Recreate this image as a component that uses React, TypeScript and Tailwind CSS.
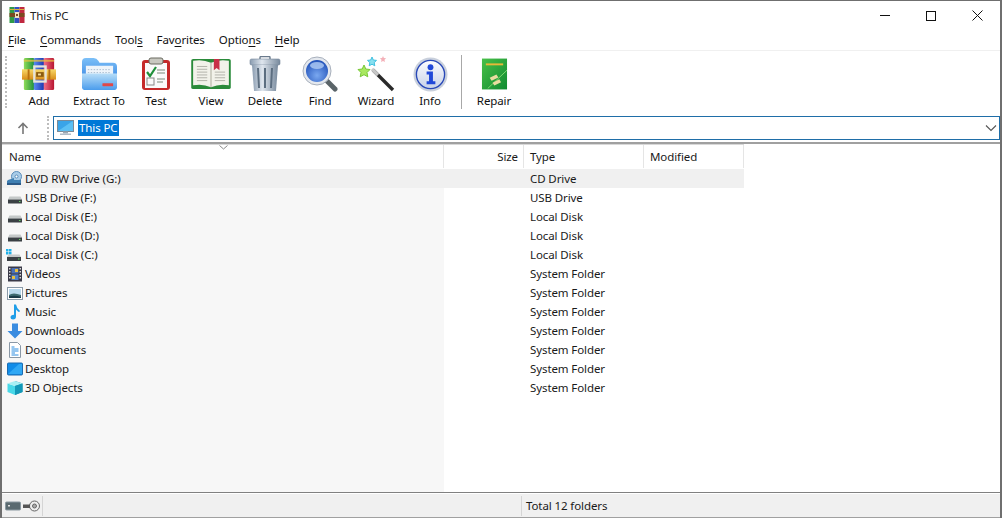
import React from "react";

const Add = () => (
  <svg width="34" height="34" viewBox="0 0 36 36">
    <defs>
      <linearGradient id="ag" x1="0" x2="1"><stop offset="0" stopColor="#8fdc5a" /><stop offset="1" stopColor="#1f8f3a" /></linearGradient>
      <linearGradient id="ab" x1="0" x2="1"><stop offset="0" stopColor="#5a8cf0" /><stop offset="1" stopColor="#1a34b0" /></linearGradient>
      <linearGradient id="ar" x1="0" x2="1"><stop offset="0" stopColor="#f0708a" /><stop offset="1" stopColor="#b81530" /></linearGradient>
      <linearGradient id="ay" x1="0" y1="0" x2="0" y2="1"><stop offset="0" stopColor="#f8d868" /><stop offset="1" stopColor="#d88c18" /></linearGradient>
    </defs>
    <rect x="2" y="1" width="11" height="34" rx="1.5" fill="url(#ag)" />
    <rect x="12.5" y="1" width="11" height="34" rx="1.5" fill="url(#ab)" />
    <rect x="23" y="1" width="11" height="34" rx="1.5" fill="url(#ar)" />
    <rect x="2" y="3" width="32" height="2" fill="#e8c040" opacity=".75" />
    <rect x="0" y="13" width="36" height="11" fill="url(#ay)" />
    <rect x="6" y="13" width="2" height="11" fill="#b87010" />
    <rect x="28" y="13" width="2" height="11" fill="#b87010" />
    <rect x="13" y="10" width="12" height="16" fill="none" stroke="#e4e4dc" strokeWidth="2.4" />
    <rect x="15" y="16" width="8" height="5" fill="#8a5a10" />
    <rect x="17" y="17.5" width="3" height="2" fill="#f8e0a0" />
  </svg>
);
const Extract = () => (
  <svg width="37" height="35" viewBox="0 0 38 36">
    <defs>
      <linearGradient id="eb" x1="0" y1="0" x2="0" y2="1"><stop offset="0" stopColor="#7cc0f8" /><stop offset="1" stopColor="#2a78dc" /></linearGradient>
      <linearGradient id="ef" x1="0" y1="0" x2="0" y2="1"><stop offset="0" stopColor="#b8def8" /><stop offset="1" stopColor="#4a9cec" /></linearGradient>
    </defs>
    <path d="M1 5 Q1 1 5 1 H13 Q16 1 18 4 L19 6 H33 Q37 6 37 10 V30 H1Z" fill="url(#eb)" />
    <rect x="5" y="9" width="28" height="11" fill="#eef4fa" />
    <path d="M7 13H31M7 16H31" stroke="#a8bcd0" strokeDasharray="1.5 1.5" />
    <path d="M1 17 H37 V31 Q37 34 33 34 H5 Q1 34 1 31Z" fill="url(#ef)" />
    <rect x="22" y="27" width="11" height="3" rx=".5" fill="#e04848" />
  </svg>
);
const Test = () => (
  <svg width="30" height="34" viewBox="0 0 30 34">
    <rect x="1" y="3" width="28" height="30" rx="3" fill="#c52a2a" />
    <rect x="4" y="6" width="22" height="25" fill="#fafafa" />
    <rect x="8" y="1" width="14" height="6" rx="2" fill="#c8c8c0" stroke="#6a6a60" />
    <path d="M6 15 L9 19 L15 10" stroke="#1f8f3a" strokeWidth="2.2" fill="none" />
    <path d="M16 13H24M16 16H24M16 22H24M16 25H22" stroke="#7a8a7a" />
    <rect x="6" y="21" width="7" height="7" fill="none" stroke="#888" />
  </svg>
);
const View = () => (
  <svg width="42" height="32" viewBox="0 0 42 34">
    <rect x="0" y="1" width="42" height="32" rx="2" fill="#2a8a3a" />
    <path d="M2 3 Q12 1 21 5 Q30 1 40 3 V29 Q30 27 21 31 Q12 27 2 29Z" fill="#f2f2ea" />
    <path d="M21 5V31" stroke="#a8a898" />
    <path d="M6 9H17M6 12H17M6 15H17M6 18H17M6 21H17M6 24H17M25 15H36M25 18H36M25 21H36M25 24H36" stroke="#b0b0a8" />
    <path d="M24 1H30V13L27 10.5L24 13Z" fill="#c83048" />
  </svg>
);
const Trash = () => (
  <svg width="32" height="36" viewBox="0 0 32 36">
    <defs>
      <linearGradient id="tg" x1="0" x2="1"><stop offset="0" stopColor="#8a9cb0" /><stop offset=".4" stopColor="#dfe6ee" /><stop offset="1" stopColor="#77899c" /></linearGradient>
    </defs>
    <rect x="11" y="0.5" width="10" height="4" rx="1" fill="none" stroke="#6a7a8c" strokeWidth="1.4" />
    <rect x="1" y="3" width="30" height="6" rx="1.5" fill="url(#tg)" stroke="#75879a" strokeWidth=".6" />
    <path d="M3 9H29L27 35H5Z" fill="url(#tg)" />
    <path d="M9 12L10 32M16 12V32M23 12L22 32" stroke="#5c6e80" strokeWidth="2" />
  </svg>
);
const Find = () => (
  <svg width="36" height="36" viewBox="0 0 36 36">
    <defs>
      <radialGradient id="fg" cx=".5" cy=".7" r=".7"><stop offset="0" stopColor="#7aa8f0" /><stop offset="1" stopColor="#1f50b8" /></radialGradient>
    </defs>
    <path d="M23 23L33 33" stroke="#5a6468" strokeWidth="5" strokeLinecap="round" />
    <circle cx="15" cy="15" r="14" fill="#e4e8ee" stroke="#a8b0bc" />
    <circle cx="15" cy="15" r="11" fill="url(#fg)" />
    <ellipse cx="15" cy="9.5" rx="7" ry="3.5" fill="#b0ccf4" opacity=".8" />
  </svg>
);
const Wizard = () => (
  <svg width="38" height="36" viewBox="0 0 38 36">
    <path d="M16 14L36 34" stroke="#2a2a2a" strokeWidth="3.4" />
    <path d="M15 13L21 19" stroke="#c8c8c8" strokeWidth="3.4" />
    <path d="M7 9l1.8 4 4.2.5-3 3 .8 4.3L7 18.700l-3.800 2.100.8-4.300-3-3 4.200-.5z" fill="#a8e860" stroke="#78c838" />
    <path d="M15 1l1.300 3 3.200.4-2.300 2.200.6 3.200-2.800-1.600-2.800 1.600.6-3.200-2.300-2.200 3.200-.4z" fill="#88e0f0" stroke="#40c0e0" />
    <path d="M26 0l.9 2 2.200.3-1.600 1.500.4 2.200-1.900-1-1.900 1 .4-2.200-1.600-1.500 2.200-.3z" fill="#f4b0b8" />
  </svg>
);
const Info = () => (
  <svg width="35" height="35" viewBox="0 0 36 36">
    <defs>
      <linearGradient id="ig" x1="0" y1="0" x2="0" y2="1"><stop offset="0" stopColor="#fbfcff" /><stop offset="1" stopColor="#c8d2e8" /></linearGradient>
    </defs>
    <circle cx="18" cy="18" r="17.500" fill="#c9d0dc" />
    <circle cx="18" cy="18" r="14.500" fill="url(#ig)" stroke="#2848b8" strokeWidth="1.4" />
    <circle cx="18" cy="10.500" r="3" fill="#2048d8" />
    <path d="M14 15H20.500V25H23V28H14V25H16.500V18H14Z" fill="#2048d8" />
  </svg>
);
const Repair = () => (
  <svg width="27" height="34" viewBox="0 0 28 34">
    <defs>
      <linearGradient id="rg" x1="0" y1="0" x2="1" y2="1"><stop offset="0" stopColor="#48c048" /><stop offset="1" stopColor="#108a30" /></linearGradient>
    </defs>
    <rect x="1" y="1" width="26" height="32" fill="url(#rg)" />
    <rect x="5" y="6" width="18" height="2" fill="#e8b838" />
    <path d="M7 32L27 13" stroke="#80d870" />
    <path d="M9 21l7-3.500 2 3-7 3.500zM12 26l7-3.500 1.800 3-7 3.500z" fill="#e8dca0" />
  </svg>
);

const Tool = ({ w, label, children }: { w: string; label: string; children: React.ReactNode }) => (
  <div className={`${w} flex flex-col items-center`}>
    <div className="h-[38px] pt-[2px] flex items-center justify-center">{children}</div>
    <span className="mt-[1px] text-[11.5px] leading-[16px] tracking-[-0.1px] text-[#111]">{label}</span>
  </div>
);

const Disk = () => (
  <svg width="16" height="16" viewBox="0 0 16 16">
    <path d="M2.500 6.500H13.500L15 9.500H1Z" fill="#c4c8c8" />
    <rect x="1" y="9.500" width="14" height="4" fill="#3a4044" />
    <rect x="12" y="11" width="1.500" height="1" fill="#60d060" />
  </svg>
);
const Dvd = () => (
  <svg width="17" height="16" viewBox="0 0 17 16">
    <circle cx="10.500" cy="5.500" r="5" fill="#a8cce8" stroke="#5a8cb8" />
    <circle cx="10.500" cy="5.500" r="1.500" fill="#fff" stroke="#5a8cb8" />
    <path d="M2 9L8 7V9H15V13Q15 14 13 14H3Q1 14 1 13V10Z" fill="#3f7fb2" />
    <rect x="1" y="12" width="14" height="2" fill="#2c5a88" />
  </svg>
);
const SysDisk = () => (
  <svg width="18" height="16" viewBox="0 0 18 16">
    <path d="M1 2h2.500v2.500H1zM4 2h2.500v2.500H4zM1 5h2.500v2.500H1zM4 5h2.500v2.500H4z" fill="#20b0e8" />
    <path d="M3.500 7.500H14.500L16 10H2Z" fill="#c4c8c8" />
    <rect x="2" y="10" width="14" height="4" fill="#3a4044" />
    <rect x="13" y="11.500" width="1.500" height="1" fill="#60d060" />
  </svg>
);
const Videos = () => (
  <svg width="16" height="16" viewBox="0 0 16 16">
    <rect x="1" y="0.500" width="14" height="15" fill="#3a3a48" />
    <path d="M2 2h1.500v1.500H2zM2 5h1.500v1.500H2zM2 8h1.500v1.500H2zM2 11h1.500v1.500H2zM12.500 2H14v1.500h-1.500zM12.500 5H14v1.500h-1.500zM12.500 8H14v1.500h-1.500zM12.500 11H14v1.500h-1.500z" fill="#d8d8d8" />
    <rect x="4.500" y="2" width="7" height="5.500" fill="#4a70b8" />
    <rect x="4.500" y="8.500" width="7" height="5.500" fill="#5080c8" />
    <rect x="8" y="3" width="3" height="3" fill="#e8c040" />
    <rect x="5" y="10" width="3" height="3" fill="#e8c040" />
  </svg>
);
const Pictures = () => (
  <svg width="16" height="16" viewBox="0 0 16 16">
    <rect x="0.500" y="2.500" width="15" height="12" fill="#fff" stroke="#8a9aa8" />
    <rect x="2" y="4" width="12" height="9" fill="#b8d8ec" />
    <path d="M2 10Q6 7 14 10V13H2Z" fill="#3e6a70" />
    <path d="M2 11.500Q8 10 14 12V13H2Z" fill="#1a3a48" />
  </svg>
);
const Music = () => (
  <svg width="16" height="16" viewBox="0 0 16 16">
    <path d="M7 0.500H9Q9.500 4 13 7Q12 9 10 6.500L9 5.500V12.500Q9 15.500 6 15.500Q3.500 15.500 3.500 13.500Q3.500 11 7 10.800Z" fill="#1f9ee8" />
  </svg>
);
const Downloads = () => (
  <svg width="16" height="16" viewBox="0 0 16 16">
    <path d="M5 0.500H11V8H15.500L8 15.500L0.500 8H5Z" fill="#3a8ce0" />
  </svg>
);
const Documents = () => (
  <svg width="16" height="16" viewBox="0 0 16 16">
    <path d="M2.500 0.500H10.500L13.500 3.500V15.500H2.500Z" fill="#fff" stroke="#8a98a6" />
    <path d="M4.500 5H7.500M4.500 7H11.500M4.500 9H11.500M4.500 11H8M4.500 13H11.500" stroke="#2a8ce0" />
  </svg>
);
const Desktop = () => (
  <svg width="16" height="16" viewBox="0 0 16 16">
    <rect x="0.500" y="2" width="15" height="12" rx="1" fill="#108ce8" stroke="#1c6cb0" />
    <path d="M1 13L12 3H15V13Z" fill="#30a8f4" />
  </svg>
);
const Cube = () => (
  <svg width="16" height="16" viewBox="0 0 16 16">
    <path d="M8 1L15.500 3.500V12L8 15Z" fill="#0e8ea8" />
    <path d="M8 6L0.500 3.500V12L8 15Z" fill="#48d8e8" />
    <path d="M8 1L15.500 3.500L8 6L0.500 3.500Z" fill="#a8f0f4" />
    <path d="M8 6L15.500 3.500V12L8 15Z" fill="#1398b8" />
  </svg>
);
const Monitor = () => (
  <svg width="17" height="16" viewBox="0 0 17 16">
    <rect x="0.500" y="0.500" width="16" height="11" fill="#3aa4e8" stroke="#7a8a98" />
    <path d="M1 11L15 1.500H16V11Z" fill="#5cc0f4" />
    <rect x="6" y="11.500" width="5" height="2" fill="#9aa8b4" />
    <rect x="3" y="13.500" width="11" height="1.500" fill="#b0bcc8" />
  </svg>
);

const rows: [React.ReactNode, string, string][] = [
  [<Dvd />, "DVD RW Drive (G:)", "CD Drive"],
  [<Disk />, "USB Drive (F:)", "USB Drive"],
  [<Disk />, "Local Disk (E:)", "Local Disk"],
  [<Disk />, "Local Disk (D:)", "Local Disk"],
  [<SysDisk />, "Local Disk (C:)", "Local Disk"],
  [<Videos />, "Videos", "System Folder"],
  [<Pictures />, "Pictures", "System Folder"],
  [<Music />, "Music", "System Folder"],
  [<Downloads />, "Downloads", "System Folder"],
  [<Documents />, "Documents", "System Folder"],
  [<Desktop />, "Desktop", "System Folder"],
  [<Cube />, "3D Objects", "System Folder"],
];

const Menu = ({ a, u, b }: { a: string; u: string; b: string }) => (
  <span>
    {a}
    <span className="underline underline-offset-2">{u}</span>
    {b}
  </span>
);

export default function App() {
  return (
    <div
      className="w-[1002px] h-[518px] flex flex-col overflow-hidden bg-white border-x-2 border-t border-[#6f6f6f] text-[11.5px] tracking-[-0.1px] text-[#1a1a1a]"
      style={{ fontFamily: '"Noto Sans", sans-serif' }}
    >
      {/* Title bar */}
      <div className="h-[29px] shrink-0 flex items-center pl-[7px]">
        <svg width="16" height="16" viewBox="0 0 16 16" className="-mt-[1px]">
          <rect x="0.500" width="5" height="16" fill="#2e9a48" />
          <rect x="5.500" width="5" height="16" fill="#3050c0" />
          <rect x="10.500" width="5" height="16" fill="#c02840" />
          <rect x="0.500" y="2" width="15" height="1" fill="#d8b040" />
          <rect x="0.500" y="6" width="15" height="4" fill="#7a4a20" />
          <rect x="6" y="5" width="4" height="6" fill="#f0e0c0" />
          <rect x="7" y="7" width="2" height="2" fill="#7a4a20" />
        </svg>
        <span className="ml-[5px] text-[#222]">This PC</span>
        <div className="ml-auto flex h-full items-center">
          <div className="w-[46px] flex justify-center"><div className="w-[10px] h-[1px] bg-[#111]" /></div>
          <div className="w-[46px] flex justify-center"><div className="w-[10px] h-[10px] border border-[#111]" /></div>
          <div className="w-[46px] flex justify-center">
            <svg width="11" height="11" viewBox="0 0 11 11"><path d="M0.500 0.500L10.500 10.500M10.500 0.500L0.500 10.500" stroke="#111" /></svg>
          </div>
        </div>
      </div>
      {/* Menu */}
      <div className="h-[21px] shrink-0 flex items-center pl-[6px] gap-[14px] border-b border-[#f0f0f0] text-[#111]">
        <Menu a="" u="F" b="ile" />
        <Menu a="" u="C" b="ommands" />
        <Menu a="Tool" u="s" b="" />
        <Menu a="Fav" u="o" b="rites" />
        <Menu a="Optio" u="n" b="s" />
        <Menu a="" u="H" b="elp" />
      </div>
      {/* Toolbar */}
      <div className="h-[61px] shrink-0 flex items-center pl-[3px]">
        <div className="h-[52px] border-l-2 border-dotted border-[#bdbdbd]" />
        <div className="ml-[4px] flex items-start">
          <Tool w="w-[56px]" label="Add"><Add /></Tool>
          <Tool w="w-[64px]" label="Extract To"><Extract /></Tool>
          <Tool w="w-[50px]" label="Test"><Test /></Tool>
          <Tool w="w-[60px]" label="View"><View /></Tool>
          <Tool w="w-[48px]" label="Delete"><Trash /></Tool>
          <Tool w="w-[62px]" label="Find"><Find /></Tool>
          <Tool w="w-[50px]" label="Wizard"><Wizard /></Tool>
          <Tool w="w-[58px]" label="Info"><Info /></Tool>
        </div>
        <div className="ml-[2px] w-[1px] h-[54px] bg-[#a8a8a8]" />
        <div className="ml-[1px]">
          <Tool w="w-[62px]" label="Repair"><Repair /></Tool>
        </div>
      </div>
      {/* Address */}
      <div className="h-[30px] shrink-0 flex items-center pt-[1px]">
        <div className="w-[42px] flex justify-center">
          <svg width="12" height="12" viewBox="0 0 12 12"><path d="M6 12V1.500M1.500 6L6 1.500L10.500 6" stroke="#777" strokeWidth="1.600" fill="none" /></svg>
        </div>
        <div className="ml-[3px] h-[24px] border-l-2 border-dotted border-[#bdbdbd]" />
        <div className="ml-[4px] flex-1 h-[24px] border border-[#1f6ea8] flex items-center pl-[3px]">
          <Monitor />
          <span className="ml-[4px] bg-[#0078d7] text-white leading-[16px] px-[1px]">This PC</span>
          <svg className="ml-auto mr-[2px]" width="12" height="8" viewBox="0 0 12 8"><path d="M1 1.500L6 6.500L11 1.500" stroke="#555" strokeWidth="1.100" fill="none" /></svg>
        </div>
      </div>
      {/* List */}
      <div className="flex-1 min-h-0 border-t-2 border-[#a0a0a0] border-b border-b-[#808080] flex flex-col relative">
        <div className="absolute left-0 top-[25px] bottom-0 w-[442px] bg-[#f7f7f7]" />
        <div className="h-[25px] w-[742px] flex shrink-0 items-center border-t border-[#d8d8d8] relative pb-[1px]">
          <div className="w-[442px] pl-[7px] border-r border-[#e5e5e5] h-full flex items-center relative">
            Name
            <svg className="absolute left-[217px] top-[0px]" width="9" height="5" viewBox="0 0 9 5"><path d="M0.500 0.500L4.500 4L8.500 0.500" stroke="#8a8a8a" fill="none" /></svg>
          </div>
          <div className="w-[80px] pr-[5px] text-right border-r border-[#e5e5e5] h-full flex items-center justify-end">Size</div>
          <div className="w-[120px] pl-[6px] border-r border-[#e5e5e5] h-full flex items-center">Type</div>
          <div className="w-[100px] pl-[6px] border-r border-[#e5e5e5] h-full flex items-center">Modified</div>
        </div>
        <div className="relative">
          {rows.map(([icon, name, type], i) => (
            <div key={i} className={`h-[19px] w-[742px] flex items-center ${i === 0 ? "bg-[#f0f0f0]" : ""}`}>
              <div className="w-[442px] flex items-center">
                <div className="w-[23px] flex justify-end pr-[2px]">{icon}</div>
                <span>{name}</span>
              </div>
              <div className="w-[80px]" />
              <div className="pl-[6px]">{type}</div>
            </div>
          ))}
        </div>
      </div>
      {/* Status */}
      <div className="h-[25px] shrink-0 flex items-center bg-[#f0f0f0] border-t border-white border-b border-b-[#a0a0a0] pt-[1px]">
        <div className="w-[41px] h-[20px] flex items-center pl-[3px] gap-[2px] border-r border-[#d5d5d5]">
          <svg width="16" height="10" viewBox="0 0 16 10"><rect x="0.500" y="1" width="15" height="8" rx="1" fill="#5a6a70" stroke="#8a98a0" /><rect x="3" y="4" width="2" height="1.500" fill="#e0e0e0" /></svg>
          <svg width="17" height="12" viewBox="0 0 17 12"><circle cx="11.500" cy="6" r="5" fill="#eee" stroke="#666" /><circle cx="11.500" cy="6" r="2" fill="#aaa" stroke="#666" /><rect x="0" y="4.500" width="7" height="3.500" fill="#555" /></svg>
        </div>
        <div className="w-[479px] h-[20px] border-r border-[#d5d5d5]" />
        <div className="pl-[4px]">Total 12 folders</div>
      </div>
    </div>
  );
}
